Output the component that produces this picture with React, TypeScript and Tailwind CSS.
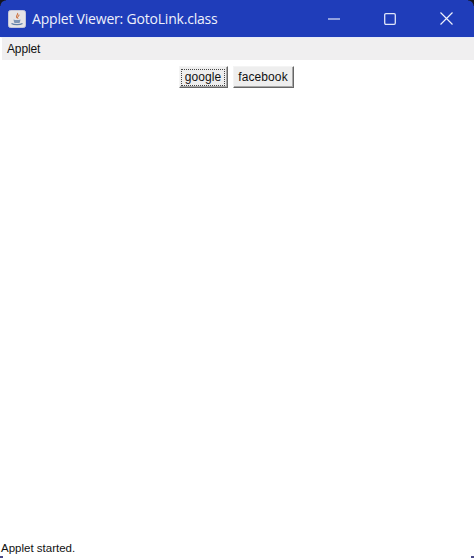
import React from "react";

function JavaIcon() {
  return (
    <svg width="18" height="18" viewBox="0 0 18 18" className="shrink-0">
      <rect x="0.5" y="0.5" width="17" height="17" rx="2" fill="#e6e4e6" stroke="#c4c6da" />
      <path d="M9.500 3c1 1.500-1.500 2.500-1 4 .2.700 1 1 1 1-.5-1 1.800-2 1.500-3.500" fill="none" stroke="#cf7a4a" strokeWidth="1.100" />
      <path d="M5.500 9.500c2 .7 5 .7 7 0l-.6 3c-.2.800-5.600.8-5.800 0z" fill="#7d95b5" />
      <path d="M3.500 13.500c2.500 1.500 8.500 1.500 11 0" fill="none" stroke="#5f7fa8" strokeWidth="1.400" />
    </svg>
  );
}

export default function App() {
  return (
    <div className="relative w-[474px] h-[558px] bg-white flex flex-col overflow-hidden font-['Liberation_Sans',Arial,sans-serif]">
      <div className="h-[37px] bg-[#1f3dba] flex items-center shrink-0">
        <div className="pl-[8px] pr-[6px] flex items-center"><JavaIcon /></div>
        <span className="text-[14px] font-['Open_Sans','Noto_Sans',sans-serif] text-[#eef1fb] tracking-[-0.2px]">Applet Viewer: GotoLink.class</span>
        <div className="ml-auto flex items-center">
          <div className="w-[56px] h-[37px] flex items-center justify-center">
            <svg width="12" height="12" viewBox="0 0 12 12"><path d="M0 6h12" stroke="#dfe5f8" strokeWidth="1.200" /></svg>
          </div>
          <div className="w-[56px] h-[37px] flex items-center justify-center">
            <svg width="12" height="12" viewBox="0 0 12 12"><rect x=".7" y=".7" width="10.600" height="10.600" rx="1.200" fill="none" stroke="#dfe5f8" strokeWidth="1.300" /></svg>
          </div>
          <div className="w-[56px] h-[37px] flex items-center justify-center">
            <svg width="13" height="13" viewBox="0 0 13 13"><path d="M.5.500l12 12M12.500.500l-12 12" stroke="#eef1fb" strokeWidth="1.200" /></svg>
          </div>
        </div>
      </div>
      <div className="h-[23px] bg-[#f0eff0] border-t border-t-[#e8ecf8] border-l-2 border-l-white flex items-center pl-[5px] text-[12px] tracking-[-0.15px] text-[#111] shrink-0">Applet</div>
      <div className="flex-1 flex justify-center items-start gap-[5px] pt-[6px] pr-[2px]">
        <button className="h-[22px] w-[49px] bg-[#eeeeee] text-[12px] tracking-[0.1px] text-[#111] border border-[#f4f4f4] border-r-[#666] border-b-[#666] flex items-center justify-center shadow-[inset_-1px_-1px_0_#a8a8a8]">
          <span className="w-[44px] h-[17px] flex items-center justify-center border border-dotted border-[#444]">google</span>
        </button>
        <button className="h-[22px] w-[61px] bg-[#eeeeee] text-[12px] tracking-[0.1px] text-[#111] border border-[#f4f4f4] border-r-[#666] border-b-[#666] flex items-center justify-center shadow-[inset_-1px_-1px_0_#a8a8a8]">facebook</button>
      </div>
      <div className="h-[18px] pl-[1px] text-[11.500px] text-[#111] leading-[16px] shrink-0">Applet started.</div>
      <div className="absolute left-0 top-0 w-[6px] h-[6px] bg-[radial-gradient(circle_at_100%_100%,transparent_5px,#14141e_6px)]" />
      <div className="absolute right-0 top-0 w-[6px] h-[6px] bg-[radial-gradient(circle_at_0%_100%,transparent_5px,#14141e_6px)]" />
      <div className="absolute left-0 bottom-0 w-[3px] h-[2px] bg-[#4a4a8a]" />
      <div className="absolute right-0 bottom-0 w-[3px] h-[2px] bg-[#4a4a8a]" />
    </div>
  );
}
